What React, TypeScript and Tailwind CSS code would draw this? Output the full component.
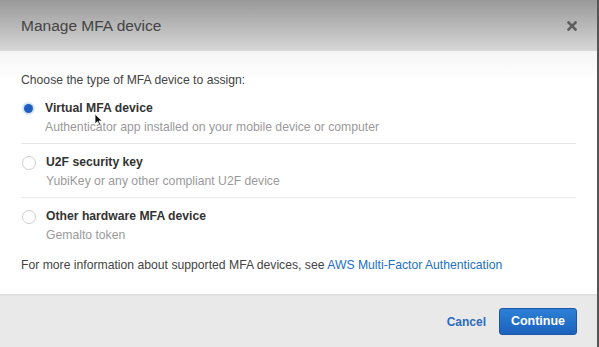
import React from "react";

function Radio({ checked }: { checked?: boolean }) {
  return checked ? (
    <span className="mt-[3px] flex h-[13px] w-[13px] shrink-0 items-center justify-center rounded-full bg-[#dbe6f5]">
      <span className="h-[9px] w-[9px] rounded-full bg-[#1f5fc4]" />
    </span>
  ) : (
    <span className="mt-[3px] h-[14px] w-[14px] shrink-0 rounded-full border border-[#cfcfcf] bg-white" />
  );
}

function Option({
  title,
  desc,
  checked,
  last,
  cursor,
}: {
  title: string;
  desc: string;
  checked?: boolean;
  last?: boolean;
  cursor?: boolean;
}) {
  return (
    <div className={`${last ? "" : "border-b border-[#e8e8e8]"} pt-[9px] pb-[6px]`}>
      <div className="relative flex gap-[10px] pl-[1px]">
        <Radio checked={checked} />
        <div className="leading-[19px]">
          <div className="font-bold text-[#333]">{title}</div>
          <div className="text-[#9a9a9a]">{desc}</div>
        </div>
        {cursor && (
          <svg
            className="absolute left-[73px] top-[14px]"
            width="9"
            height="13"
            viewBox="0 0 9 13"
          >
            <path d="M1 1 L1 11 L3.5 8.6 L5.4 12.4 L6.8 11.7 L5 8 L8.2 8 Z" fill="#111" stroke="#fff" strokeWidth="0.8" />
          </svg>
        )}
      </div>
    </div>
  );
}

export default function App() {
  return (
    <div
      className="flex h-[347px] w-[599px] overflow-hidden bg-[#555]"
      style={{ fontFamily: '"Liberation Sans", Arial, sans-serif' }}
    >
      <div className="flex w-[597px] flex-col bg-white">
        <div className="flex h-[51px] shrink-0 items-center justify-between border-b border-[#d9d9d9] bg-gradient-to-b from-[#999999] to-[#d6d6d6] pl-[21px] pr-[20px]">
          <span className="mt-[2px] text-[15.5px] text-[#444]">Manage MFA device</span>
          <svg width="10" height="10" viewBox="0 0 10 10" className="mt-[2px]">
            <path d="M1.5 1.5 L8.5 8.5 M8.5 1.5 L1.5 8.5" stroke="#5f5f5f" strokeWidth="2.6" strokeLinecap="square" />
          </svg>
        </div>
        <div className="h-[243px] shrink-0 bg-gradient-to-b from-[#f5f5f5] to-white to-[12%] px-[21px] pt-[20px] text-[12.2px] leading-[19px] text-[#444]">
          <div>Choose the type of MFA device to assign:</div>
          <div>
            <Option
              title="Virtual MFA device"
              desc="Authenticator app installed on your mobile device or computer"
              checked
              cursor
            />
            <Option title="U2F security key" desc="YubiKey or any other compliant U2F device" />
            <Option title="Other hardware MFA device" desc="Gemalto token" last />
          </div>
          <div className="mt-[5px]">
            For more information about supported MFA devices, see{" "}
            <span className="text-[#2170c4]">AWS Multi-Factor Authentication</span>
          </div>
        </div>
        <div className="flex flex-1 items-center justify-end gap-[13px] border-t-2 border-[#e0e0e0] bg-[#e9e9e9] pr-[20px]">
          <span className="text-[12px] font-bold text-[#2e6bbd]">Cancel</span>
          <span className="flex h-[27px] w-[78px] items-center justify-center rounded-[3px] border border-[#1a55a8] bg-gradient-to-b from-[#2c80d6] to-[#1c62bd] text-[12.5px] font-bold text-white">
            Continue
          </span>
        </div>
      </div>
    </div>
  );
}
